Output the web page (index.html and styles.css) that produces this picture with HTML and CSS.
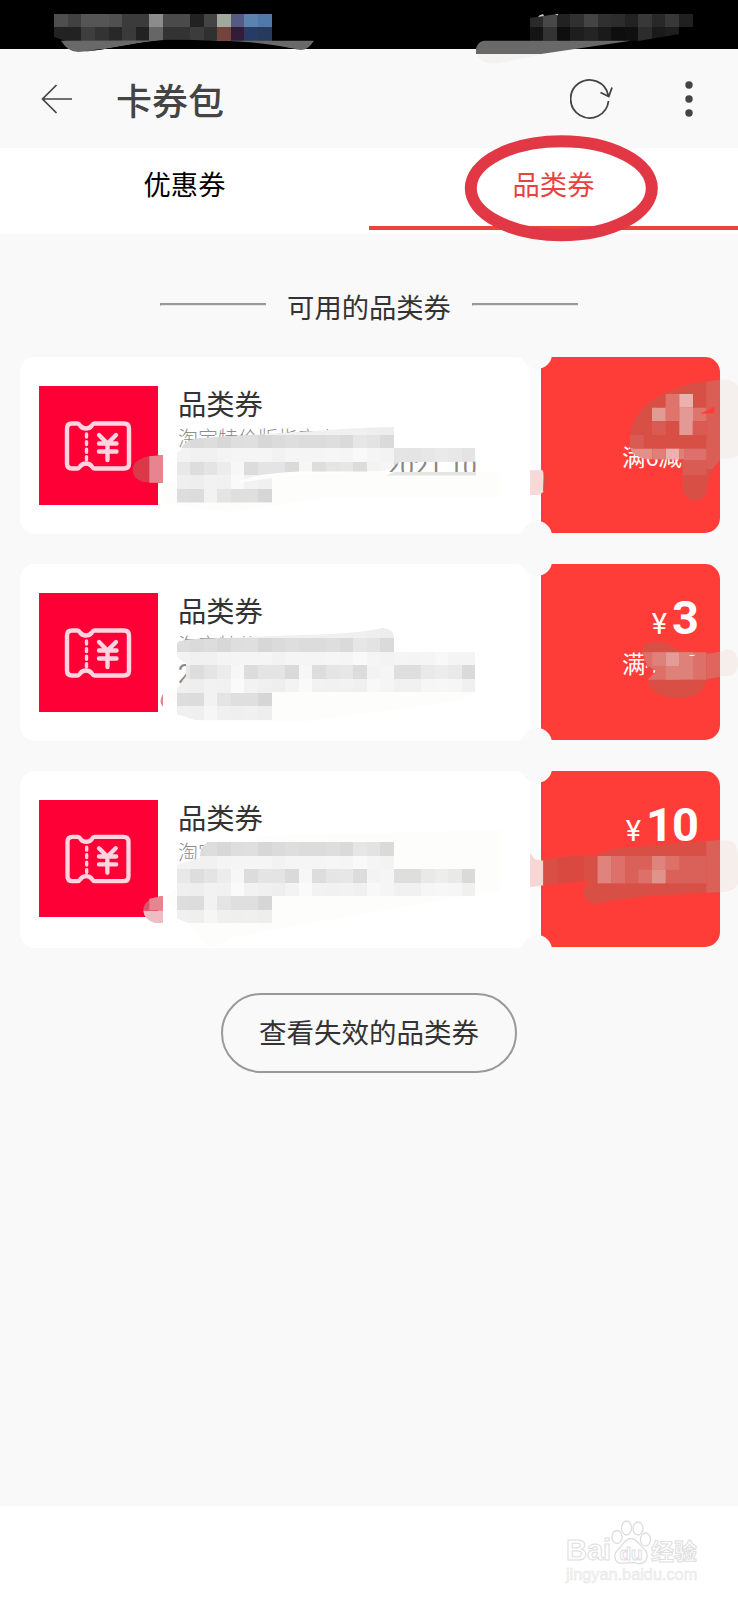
FILE: index.html
```html
<!DOCTYPE html>
<html lang="zh-CN">
<head>
<meta charset="utf-8">
<title>卡券包</title>
<link rel="stylesheet" href="styles.css">
</head>
<body>
<svg class="defs" width="0" height="0">
  <symbol id="ticket" viewBox="0 0 119 119">
    <g fill="none" stroke="#ffd3e0" stroke-width="4.400" stroke-linejoin="round" stroke-linecap="round">
      <path d="M33 37.500h5.500c1.500 0 2 1 3 2.500 1.500 1.800 3 2.500 5.500 2.500s4-.7 5.500-2.500c1-1.500 1.500-2.500 3-2.500H85q5 0 5 5v35q0 5-5 5H55.500c-1.500 0-2-1-3-2.500-1.500-1.800-3-2.500-5.500-2.500s-4 .7-5.500 2.500c-1 1.500-1.500 2.500-3 2.500H33q-5 0-5-5v-35q0-5 5-5z"/>
      <path d="M60 49l8.500 8.500L77 49M60 57.500h17.500M60 65.500h17.500M68.500 58v16"/>
      <path d="M47.500 48v26" stroke-width="3.400" stroke-dasharray="3 4.600"/>
    </g>
  </symbol>
</svg>
<div class="page">
  <div class="status"></div>
  <header class="header">
    <svg class="back" viewBox="0 0 32 30"><path d="M15.500 1L1.500 15l14 14M1.500 15H31" fill="none" stroke="#444" stroke-width="1.700"/></svg>
    <h1 class="title">卡券包</h1>
    <svg class="reload" viewBox="0 0 44 42"><path d="M38.500 23A19 19 0 1 1 38.300 17.500M30.500 14.500l8.300 4L42 9.500" fill="none" stroke="#444" stroke-width="1.800"/></svg>
    <svg class="more" viewBox="0 0 8 36"><g fill="#444"><circle cx="4" cy="4" r="3.700"/><circle cx="4" cy="18" r="3.700"/><circle cx="4" cy="32" r="3.700"/></g></svg>
  </header>
  <nav class="tabs">
    <a class="tab">优惠券</a>
    <a class="tab tab-active">品类券</a>
  </nav>
  <main class="content">
    <div class="section"><i class="rule"></i><span>可用的品类券</span><i class="rule"></i></div>
    <div class="list">
      <article class="coupon">
        <div class="info">
          <svg class="thumb"><use href="#ticket"/></svg>
          <div class="text"><h2>品类券</h2><p class="scope">淘宝特价版指定上</p><p class="date date-end">2021.10</p></div>
        </div>
        <div class="joint"></div>
        <div class="value"><div class="price"></div><p class="cond">满6减</p></div>
      </article>
      <article class="coupon">
        <div class="info">
          <svg class="thumb"><use href="#ticket"/></svg>
          <div class="text"><h2>品类券</h2><p class="scope">淘宝特价</p><p class="date">2</p></div>
        </div>
        <div class="joint"></div>
        <div class="value"><div class="price"><span class="yen">¥</span><b>3</b></div><p class="cond">满4</p></div>
      </article>
      <article class="coupon">
        <div class="info">
          <svg class="thumb thumb-short"><use href="#ticket"/></svg>
          <div class="text"><h2>品类券</h2><p class="scope">淘宝</p></div>
        </div>
        <div class="joint"></div>
        <div class="value"><div class="price"><span class="yen">¥</span><b>10</b></div></div>
      </article>
    </div>
    <button class="expired">查看失效的品类券</button>
  </main>
  <footer class="footer">
    <div class="mark">
      <div class="brand"><span class="bai">Bai</span>
        <svg class="paw" viewBox="0 0 40 45"><g fill="#fff" stroke="#dedede" stroke-width="1.300"><ellipse cx="6" cy="17" rx="5" ry="6.500"/><ellipse cx="15.500" cy="8" rx="5" ry="7"/><ellipse cx="27" cy="8.500" rx="5" ry="6.500"/><ellipse cx="34.500" cy="19.500" rx="5" ry="6.500"/><path d="M20 18.500c6 0 8 6 13 10.500s4 14-4 14.500c-4 .3-6-1-9-1s-6 1-10 .8C3 43 2 34 7 29.500S14 18.500 20 18.500z"/></g><text x="20" y="39.500" text-anchor="middle" class="du">du</text></svg>
        <span class="jy">经验</span></div>
      <div class="domain">jingyan.baidu.com</div>
    </div>
  </footer>
  <svg class="marks" viewBox="0 0 738 1600">
    <defs>
      <clipPath id="c1"><path d="M176 454L181 450Q183 440 200 438L330 430Q370 427 394 427V448H476V461.700L400 462 384 471.500H300Q250 474 235 483L272 478V503H176z"/></clipPath>
      <clipPath id="c2"><path d="M176 656V645Q178 640 195 639L330 634Q365 632 382 628Q394 629 394 638V652H476V692H272V720H195L176 714V690L186 676V664z"/></clipPath>
      <clipPath id="c3"><path d="M176 865L200 858Q200 846 208 842H394V869H476V897H272V924H190L176 918z"/></clipPath>
      <clipPath id="bar"><path d="M54 13H272V41H66L54 37z"/></clipPath>
      <clipPath id="barR"><path d="M530 18L560 13.600H693V27H679.500V34L640 40.700H530z"/></clipPath>
    </defs>
    <g clip-path="url(#bar)" id="statusLeft"></g>
    <path d="M61 40.700Q68 52 78 52C110 50 140 41 172 39.500L220 40.700H314Q308 50 301 50C285 48 270 41 200 40.300z" fill="#696969"/>
    <path d="M85 51.500C115 49 140 41 172 39.500C220 40 250 43 296 49V49H100z" fill="#000"/>
    <g clip-path="url(#barR)" id="statusRight"></g>
    <path d="M538 17q1-2 5-3l1 2zM555 14h3v1.500z" fill="#ccc"/>
    <path d="M477 54Q480 66 500 63L543 54z" fill="#f3f2f0"/>
    <path d="M476 54V49Q478 41 484 40.700H631L541 54z" fill="#696969"/>

    <ellipse cx="561.300" cy="188.200" rx="90.500" ry="47" fill="none" stroke="#e23845" stroke-width="12"/>

    <g fill="#fdfdfb">
      <path d="M160 486Q170 480 180 480L380 472H500V497H330L230 512Q190 508 165 503z"/>
      <path d="M162 693Q170 688 180 688L476 690Q470 700 430 705L300 722H200z"/>
      <path d="M165 897L260 836L500 830V890L300 925 230 938Q210 960 190 925z"/>
    </g>
    <g clip-path="url(#c1)" id="m1"></g>
    <g clip-path="url(#c2)" id="m2"></g>
    <g clip-path="url(#c3)" id="m3"></g>
    <path d="M240 482Q300 473 384 471.500L380 476H480V492H272V478z" fill="#fdfdfb"/>
    <path d="M394 472H476V475.500H386z" fill="#e6e6e6"/>

    <g transform="translate(0 345) scale(.33333)"><path d="M489 331Q445 332 430 338Q398 350 398 374Q400 408 440 412L489 413z" fill="#da3948"/><path d="M448 334L489 331V413H448z" fill="#e68590"/></g>
    <path d="M163 694Q158 701 163 707z" fill="#e68590"/>
    <g transform="translate(0 760) scale(.33333)"><path d="M489 408Q430 415 430 452H489z" fill="#dc5267"/><path d="M448 416L489 408V450H448z" fill="#e68590"/><path d="M430 452H489V489H465Q432 480 430 452z" fill="#f0bcc4"/></g>

    <g transform="translate(369 345) scale(.33333)">
      <path d="M483 376L521 376Q528 390 524 440L510 450H483z" fill="#f7d9d8"/><path d="M524 384Q535 390 535 410T522 440z" fill="#dd4a42"/>
      <path d="M1053 104Q1107 100 1110 140V330Q1100 340 1053 342z" fill="#f5f0ed"/>
      <path d="M783 275Q790 210 850 165Q930 112 1053 104V345Q1020 380 1016 420Q1012 466 978 467Q940 464 940 415V343H858Q785 340 783 275z" fill="#d85045"/>
      <path d="M1012 110L1053 104V345L1030 372H1012z" fill="#da5e55"/>
      <path d="M890 147h41v81h-41zM971 188h41v41h-41z" fill="#df746d"/><path d="M931 147h41v41h-41z" fill="#eab1af"/><path d="M849 188h41v40h-41zM931 188h41v82h-41z" fill="#e39994"/>
      <path d="M783 270h41v41h-41zM849 229h41v41h-41zM971 229h41v41h-41z" fill="#da5b53"/>
      <path d="M785 311h65v32h-10Q790 335 785 311z" fill="#e39089"/><path d="M945 311h67v34h-67z" fill="#dd706a"/><path d="M940 345h72v46h-72z" fill="#da5b53"/><path d="M890 311h41v32h-41z" fill="#eab1af"/><path d="M850 311h40v32h-40zM931 311h14v32h-14z" fill="#e07f78"/>
      <path d="M993 206L1036 185V205z" fill="#fe3d39"/>
    </g>
    <g transform="translate(369 555) scale(.33333)">
      <path d="M1053 290L1075 283Q1107 285 1107 325T1070 363H1053z" fill="#f5eeeb"/>
      <path d="M820 290L822 272Q850 255 890 265L940 292Q1000 300 1053 290V366L1012 374Q1010 400 980 420Q930 440 870 418Q840 400 836 375L862 347L835 338z" fill="#d85045"/>
      <path d="M820 292H1012V374H836L862 347L835 332z" fill="#dd7069"/><path d="M890 292h41v41h-41z" fill="#e39b97"/><path d="M850 292h40v40h-40zM890 333h41v41h-41zM931 292h41v81h-41z" fill="#dd817a"/>
      <path d="M1012 297L1053 290V366L1012 372z" fill="#df655d"/><path d="M958 300Q970 306 980 299z" fill="#fff"/>
    </g>
    <g transform="translate(369 760) scale(.33333)">
      <path d="M483 278L497 298 523 302V376L483 382z" fill="#f6d7d5"/>
      <path d="M1053 243Q1107 230 1107 290V370Q1100 395 1053 397z" fill="#f5eeeb"/>
      <path d="M523 300Q600 285 690 284Q715 268 760 264L1053 240V397Q800 405 690 430Q645 430 645 398Q646 372 665 362Q600 365 523 376z" fill="#d85045"/>
      <path d="M564 294L645 286V363L564 372z" fill="#da4940"/>
      <path d="M727 288H1012V370H686V288z" fill="#da6159"/><path d="M686 288h41v82h-41zM849 288h41v41h-41z" fill="#df847d"/><path d="M727 288h41v82h-41zM890 288h41v41h-41zM808 329h41v41h-41z" fill="#dd7069"/><path d="M849 329h41v41h-41z" fill="#de948b"/><path d="M1012 243L1053 240V397L1012 398z" fill="#db6057"/>
    </g>
  </svg>
</div>
<script src="mosaic.js"></script>
</body>
</html>
```
FILE: styles.css
```css
* { box-sizing: border-box; margin: 0; padding: 0; }
body { background: #f9f9f9; font-family: "Noto Sans CJK SC", "Noto Sans", sans-serif; color: #333; }
.defs { position: absolute; }
.page { position: relative; width: 738px; height: 1600px; display: flex; flex-direction: column; overflow: hidden; background: #f9f9f9; }
.status { height: 49px; background: #000; flex: none; }
.header { height: 99px; flex: none; display: flex; align-items: center; padding: 0 45px 0 41px; }
.back { width: 32px; height: 30px; }
.title { font-size: 36px; line-height: 50px; font-weight: 500; color: #444; margin-left: 43px; margin-top: 1px; flex: 1; }
.reload { width: 44px; height: 42px; margin-right: 71px; }
.more { width: 8px; height: 36px; }
.tabs { height: 86px; flex: none; display: flex; background: #fff; }
.tab { width: 369px; height: 82px; padding-bottom: 4px; text-align: center; font-size: 27.300px; line-height: 71px; color: #000; }
.tab-active { color: #e8443e; border-bottom: 4px solid #e8453f; }
.content { flex: 1; display: flex; flex-direction: column; align-items: center; }
.section { height: 123px; padding-top: 52px; display: flex; justify-content: center; gap: 21px; font-size: 27.300px; line-height: 40px; }
.rule { width: 106px; height: 3px; margin-top: 17px; border-top: 2px solid #999; border-left: 1px solid #999; border-bottom: 1px solid #e6e6e6; }
.list { width: 738px; display: flex; flex-direction: column; gap: 31px; padding: 0 18px 0 20px; }
.coupon { position: relative; height: 176px; display: flex; }
.info { width: 510px; height: 177px; display: flex; background: #fff; border-radius: 15px; padding: 29px 0 0 19px; }
.thumb { width: 119px; height: 119px; background: #ff0036; flex: none; }
.thumb-short { height: 117px; }
.text { margin-left: 20px; white-space: nowrap; }
.text h2 { font-size: 28.300px; line-height: 36px; font-weight: 400; margin-top: -1px; }
.scope { font-size: 20px; line-height: 30px; margin-top: 2px; color: #8d8d8d; font-weight: 300; }
.date { font: 400 25px/32px Roboto, sans-serif; margin-top: -1px; color: #888; }
.date-end { margin-left: 208px; }
.joint { width: 11px; background: #fcfcfc; }
.value { width: 179px; background: #fe3d39; border-radius: 0 15px 15px 0; color: #fff; padding: 27px 22px 0 0; text-align: right; }
.joint::before, .joint::after { content: ""; position: absolute; left: 502px; width: 30px; height: 16px; background: #f9f9f9; }
.joint::before { top: -4px; border-radius: 0 0 15px 15px; }
.joint::after { bottom: -4px; border-radius: 15px 15px 0 0; }
.price { height: 54px; display: flex; justify-content: flex-end; align-items: baseline; gap: 5px; }
.price b { font: 700 47px/54px Roboto, sans-serif; letter-spacing: -1px; }
.yen { font: 400 29px/54px Roboto, sans-serif; }
.cond { width: 100px; margin-left: 81px; font-size: 23.500px; line-height: 36px; text-align: left; white-space: nowrap; }
.expired { margin-top: 46px; width: 296px; height: 80px; padding-bottom: 5px; border: 2px solid #999; border-radius: 40px; background: transparent; color: #333; font: 400 27.500px/40px "Noto Sans CJK SC", sans-serif; }
.footer { height: 94px; flex: none; background: #fff; display: flex; justify-content: flex-end; padding: 13px 40px 0 0; }
.mark { width: 132px; color: #fff; -webkit-text-stroke: 1px #dedede; }
.brand { height: 46px; display: flex; align-items: flex-end; }
.bai { width: 45px; font: 700 29px/30px "Liberation Sans", sans-serif; }
.paw { width: 40px; height: 45px; flex: none; }
.du { font: 700 19px "Liberation Sans", sans-serif; fill: #fff; stroke: #dedede; stroke-width: 1px; }
.jy { font-size: 23px; line-height: 29px; font-weight: 700; white-space: nowrap; }
.domain { font: 400 16.300px/18px "Liberation Sans", sans-serif; color: #f4f4f4; -webkit-text-stroke: .5px #e6e6e6; white-space: nowrap; }
.marks { position: absolute; left: 0; top: 0; width: 738px; height: 1600px; pointer-events: none; }
```
FILE: mosaic.js
```js
// Draws pixelated areas on a fixed grid that is shared by the whole screen.
const CELL = 13.58;
function row(id, x, y, colors) {
  const group = document.getElementById(id);
  colors.split(' ').forEach((c, i) => {
    const r = document.createElementNS('http://www.w3.org/2000/svg', 'rect');
    r.setAttribute('x', (x + i) * CELL);
    r.setAttribute('y', y * CELL);
    r.setAttribute('width', CELL);
    r.setAttribute('height', CELL);
    r.setAttribute('shape-rendering', 'crispEdges');
    r.setAttribute('fill', '#' + (c.length === 2 ? c + c + c : c));
    group.appendChild(r);
  });
}
row('statusLeft', 4, 1, '4e 41 55 55 50 3b 3b 8c 4a 4a 22 44 9faa9c 555a82 5c82b0 5078a8');
row('statusLeft', 4, 2, '22 22 3e 33 28 3a 22 66 33 33 3c 30 74443c 321c38 263c66 263a5e');
row('statusRight', 39, 1, '2a 48 22 30 44 30 2c 22 38 28 38 20');
row('statusRight', 39, 2, '14 33 0e 1e 24 1a 0e 10 2c 1a 1e');

[['m1', 32], ['m2', 47], ['m3', 62]].forEach(([id, y]) => {
  row(id, 13, y - 1, 'f0 f0 f0 f0 f0 f0 f0 f0 f0 f0 f0 f0 f0 f0 ee ed');
  row(id, 13, y, 'dd da dd d8 de df d7 db de dc dc de da e6 e3 da');
  row(id, 13, y + 1, 'f3 f1 f1 f4 f5 f5 f5 f2 f5 f5 f5 f6 f5 f9 f5 f3 ' +
    (id === 'm1' ? 'e5 e4 e7 ea e8 e4' : 'f5 f4 f5 f8 f4 f4'));
  row(id, 13, y + 2, 'e8 dd e4 ec f7 dc e4 e4 da f7 dd e5 e7 dc f3 f5 de de e9 ed e9 da');
  row(id, 13, y + 3, 'ef ee f2 f1 fa f2 f0 ee f3 fa f2 f1 f2 f0 f8 f5 f1 f1 f6 f7 f6 f0');
  row(id, 13, y + 4, 'dd dc f2 e4 df df d6');
  row(id, 13, y + 5, 'f0 ef f6 f0 ef f0 ee');
});
```
